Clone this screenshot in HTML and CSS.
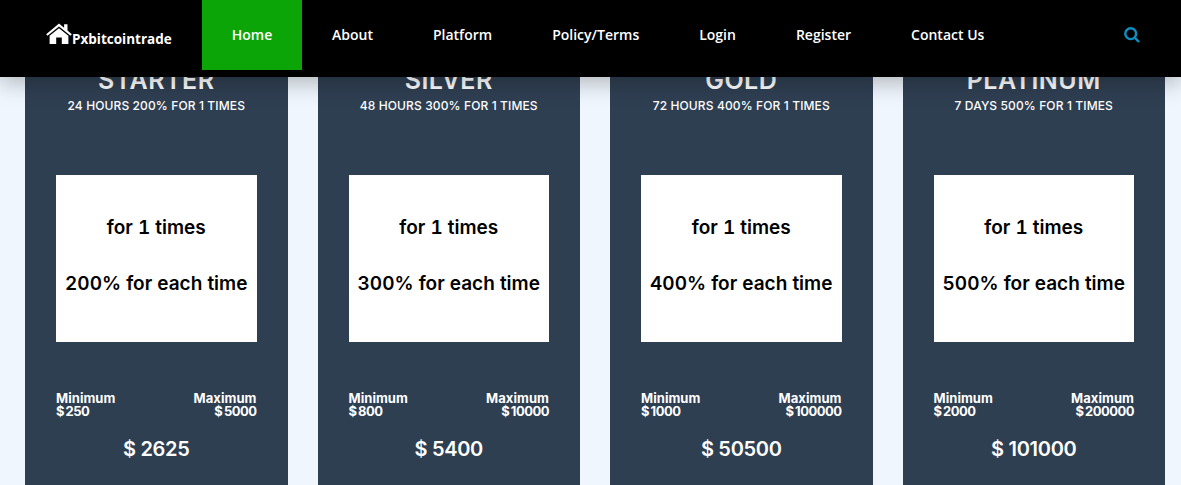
FILE: index.html
```html
<!DOCTYPE html>
<html lang="en">
<head>
<meta charset="utf-8">
<title>Pxbitcointrade</title>
<link rel="stylesheet" href="styles.css">
</head>
<body>
<header class="topbar">
  <a class="brand" href="#">
    <svg class="brand-icon" viewBox="0 0 26 21" aria-hidden="true"><path d="M13 0.6 0.2 11.2l1.3 1.5L13 3.4l11.5 9.3 1.3-1.5-4.3-3.6V1.2h-3.4v3.6z"/><path d="M13 5.2 3.6 12.8V21h6.6v-6.4h5.6V21h6.6v-8.2z"/></svg>
    <span>Pxbitcointrade</span>
  </a>
  <nav class="menu">
    <a class="menu-item active" href="#">Home</a>
    <a class="menu-item" href="#">About</a>
    <a class="menu-item" href="#">Platform</a>
    <a class="menu-item" href="#">Policy/Terms</a>
    <a class="menu-item" href="#">Login</a>
    <a class="menu-item" href="#">Register</a>
    <a class="menu-item" href="#">Contact Us</a>
  </nav>
  <svg class="search" viewBox="0 0 16 16" aria-hidden="true"><circle cx="6.7" cy="6.7" r="5.4"/><path d="M10.7 10.7 15 15"/></svg>
</header>
<main class="plans">
  <article class="card">
    <h2 class="card-title">STARTER</h2>
    <p class="card-sub">24 HOURS 200% FOR 1 TIMES</p>
    <div class="box"><p>for 1 times</p><p>200% for each time</p></div>
    <div class="limits"><div>Minimum<span class="amount">$ 250</span></div><div class="right">Maximum<span class="amount">$ 5000</span></div></div>
    <p class="total">$ 2625</p>
  </article>
  <article class="card">
    <h2 class="card-title">SILVER</h2>
    <p class="card-sub">48 HOURS 300% FOR 1 TIMES</p>
    <div class="box"><p>for 1 times</p><p>300% for each time</p></div>
    <div class="limits"><div>Minimum<span class="amount">$ 800</span></div><div class="right">Maximum<span class="amount">$ 10000</span></div></div>
    <p class="total">$ 5400</p>
  </article>
  <article class="card">
    <h2 class="card-title">GOLD</h2>
    <p class="card-sub">72 HOURS 400% FOR 1 TIMES</p>
    <div class="box"><p>for 1 times</p><p>400% for each time</p></div>
    <div class="limits"><div>Minimum<span class="amount">$ 1000</span></div><div class="right">Maximum<span class="amount">$ 100000</span></div></div>
    <p class="total">$ 50500</p>
  </article>
  <article class="card">
    <h2 class="card-title">PLATINUM</h2>
    <p class="card-sub">7 DAYS 500% FOR 1 TIMES</p>
    <div class="box"><p>for 1 times</p><p>500% for each time</p></div>
    <div class="limits"><div>Minimum<span class="amount">$ 2000</span></div><div class="right">Maximum<span class="amount">$ 200000</span></div></div>
    <p class="total">$ 101000</p>
  </article>
</main>
</body>
</html>
```
FILE: styles.css
```css
* { box-sizing: border-box; }
html, body { margin: 0; height: 485px; overflow: hidden; }
body { background: #eff6fd; font-family: Inter, "Liberation Sans", sans-serif; color: #fff; position: relative; }
a { color: inherit; text-decoration: none; }
p, h2 { margin: 0; }

.topbar {
  position: absolute; top: 0; left: 0; right: 0; height: 77px; z-index: 2;
  background: #000; display: flex; align-items: flex-start;
  box-shadow: 0 5px 22px rgba(0, 0, 0, .28);
  font-family: "Open Sans", sans-serif; font-weight: 600;
}
.brand { display: flex; align-items: flex-end; width: 202px; height: 45px; padding-left: 46px; font-size: 13.5px; line-height: 16px; font-weight: 700; }
.brand-icon { width: 26px; height: 21px; fill: #fff; flex: none; margin-bottom: 1px; }
.brand span { margin-bottom: -2px; }
.menu { display: flex; }
.menu-item { height: 69px; padding: 0 30px; display: flex; align-items: center; font-size: 14px; }
.menu-item.active { background: #0ba508; width: 100px; height: 70px; padding: 0 0 1px; justify-content: center; }
.search { width: 16px; height: 16px; margin: 27px 41px 0 auto; fill: none; stroke: #0e8fc4; stroke-width: 2.4; }

.plans { display: grid; grid-template-columns: repeat(4, 1fr); gap: 30px; padding: 0 16px 0 25px; height: 485px; }
.card { background: #2f3f52; height: 485px; padding: 66px 31px 0; display: flex; flex-direction: column; align-items: stretch; text-align: center; }
.card-title { font-size: 25px; line-height: 28px; font-weight: 600; letter-spacing: .5px; white-space: nowrap; }
.card-sub { font-size: 12px; line-height: 16px; margin-top: 4px; letter-spacing: .12px; font-weight: 500; white-space: nowrap; }
.box { height: 167px; margin-top: 61px; background: #fff; color: #000; display: flex; flex-direction: column; align-items: center; gap: 35px; padding-top: 42px; font-size: 19px; line-height: 21px; font-weight: 600; white-space: nowrap; font-variant-numeric: tabular-nums; }
.limits { display: flex; justify-content: space-between; margin-top: 50px; font-size: 13px; line-height: 13px; font-weight: 700; text-align: left; letter-spacing: .05px; }
.limits .right { text-align: right; }
.amount { display: block; letter-spacing: -.5px; word-spacing: -1px; }
.total { margin-top: 18px; font-size: 20px; line-height: 26px; font-weight: 600; letter-spacing: -.3px; }
```
